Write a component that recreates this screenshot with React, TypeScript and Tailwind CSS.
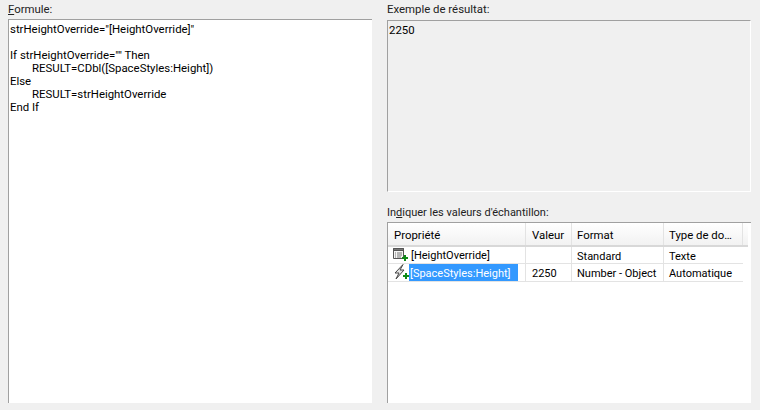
import React from "react";

function TableIcon() {
  return (
    <svg width="18" height="16" viewBox="0 0 18 16" className="shrink-0">
      <path d="M0.500 1.500h10v10h-10z" fill="#f4f4f4" stroke="#555" />
      <path d="M0.500 1.500h10v2h-10z" fill="#777" stroke="#555" />
      <path d="M2 6h1M4 6h5M2 8h1M4 8h5M2 10h1M4 10h4" stroke="#777" />
      <path d="M11 8h2v2h2v2h-2v2h-2v-2H9v-2h2z" fill="#0e8a16" />
    </svg>
  );
}

function BoltIcon() {
  return (
    <svg width="18" height="17" viewBox="0 0 18 17" className="shrink-0">
      <path d="M10 0.500L2 9h4L3 15l8-9H7z" fill="#e4e4e4" stroke="#444" />
      <path d="M12 9h2v2h2v2h-2v2h-2v-2h-2v-2h2z" fill="#0e8a16" />
    </svg>
  );
}

export default function App() {
  return (
    <div className="w-[760px] h-[410px] bg-[#f0f0f0] overflow-hidden text-[11.4px] leading-[13px] text-black font-['Roboto','DejaVu_Sans',sans-serif]">
      <div className="flex gap-[15px] pl-2 pt-[3px] h-[403px]">
        <div className="flex flex-col w-[364px] h-full">
          <div className="h-[16px] text-[#222]"><span className="underline">F</span>ormule:</div>
          <div className="flex-1 bg-white border border-[#a0a0a0] border-r-0 border-b-0 pl-[1px] pt-[3px] leading-[13px] whitespace-pre">
            <div>strHeightOverride="[HeightOverride]"</div>
            <div className="h-[13px]" />
            <div>If strHeightOverride="" Then</div>
            <div className="pl-[22px]">RESULT=CDbl([SpaceStyles:Height])</div>
            <div>Else</div>
            <div className="pl-[22px]">RESULT=strHeightOverride</div>
            <div>End If</div>
          </div>
        </div>
        <div className="flex flex-col w-[364px] h-full">
          <div className="h-[17px] text-[#222]">Exemple de résultat:</div>
          <div className="h-[172px] bg-[#f0f0f0] border border-t-[#a0a0a0] border-l-[#a0a0a0] border-r-white border-b-white pl-[1px] pt-[3px]">2250</div>
          <div className="h-[30px] pt-[14px] text-[11px] text-[#222]">In<span className="underline">d</span>iquer les valeurs d'échantillon:</div>
          <div className="flex-1 bg-white border-t border-l border-[#a0a0a0] text-[11px]">
            <div className="flex h-[24px] w-[360px] border-b-2 border-[#d8d8d8] bg-gradient-to-b from-white to-[#f2f2f2] text-[11.4px]">
              <div className="w-[138px] pl-[6px] pt-[6px] border-r border-[#e3e3e3]">Propriété</div>
              <div className="w-[46px] pl-[6px] pt-[6px] border-r border-[#e3e3e3]">Valeur</div>
              <div className="w-[92px] pl-[5px] pt-[6px] border-r border-[#e3e3e3]">Format</div>
              <div className="w-[79px] pl-[5px] pt-[6px] border-r border-[#e3e3e3]">Type de do…</div>
            </div>
            <div className="flex h-[17px] w-[355px] border-b border-[#e3e3e3]">
              <div className="w-[138px] flex items-center pl-[5px] border-r border-[#e3e3e3]"><TableIcon /><span className="pt-[1px]">[HeightOverride]</span></div>
              <div className="w-[46px] border-r border-[#e3e3e3]" />
              <div className="w-[92px] pl-[5px] pt-[3px] border-r border-[#e3e3e3]">Standard</div>
              <div className="w-[79px] pl-[5px] pt-[3px]">Texte</div>
            </div>
            <div className="flex h-[18px] w-[355px] border-b border-[#e3e3e3]">
              <div className="w-[138px] flex items-center pl-[5px] border-r border-[#e3e3e3]"><BoltIcon /><span className="bg-[#3399ff] text-white h-[17px] w-[109px] pl-[1px] pt-[3px] -ml-[2px]">[SpaceStyles:Height]</span></div>
              <div className="w-[46px] pl-[6px] pt-[3px] border-r border-[#e3e3e3]">2250</div>
              <div className="w-[92px] pl-[5px] pt-[3px] border-r border-[#e3e3e3]">Number - Object</div>
              <div className="w-[79px] pl-[5px] pt-[3px]">Automatique</div>
            </div>
          </div>
        </div>
      </div>
    </div>
  );
}
